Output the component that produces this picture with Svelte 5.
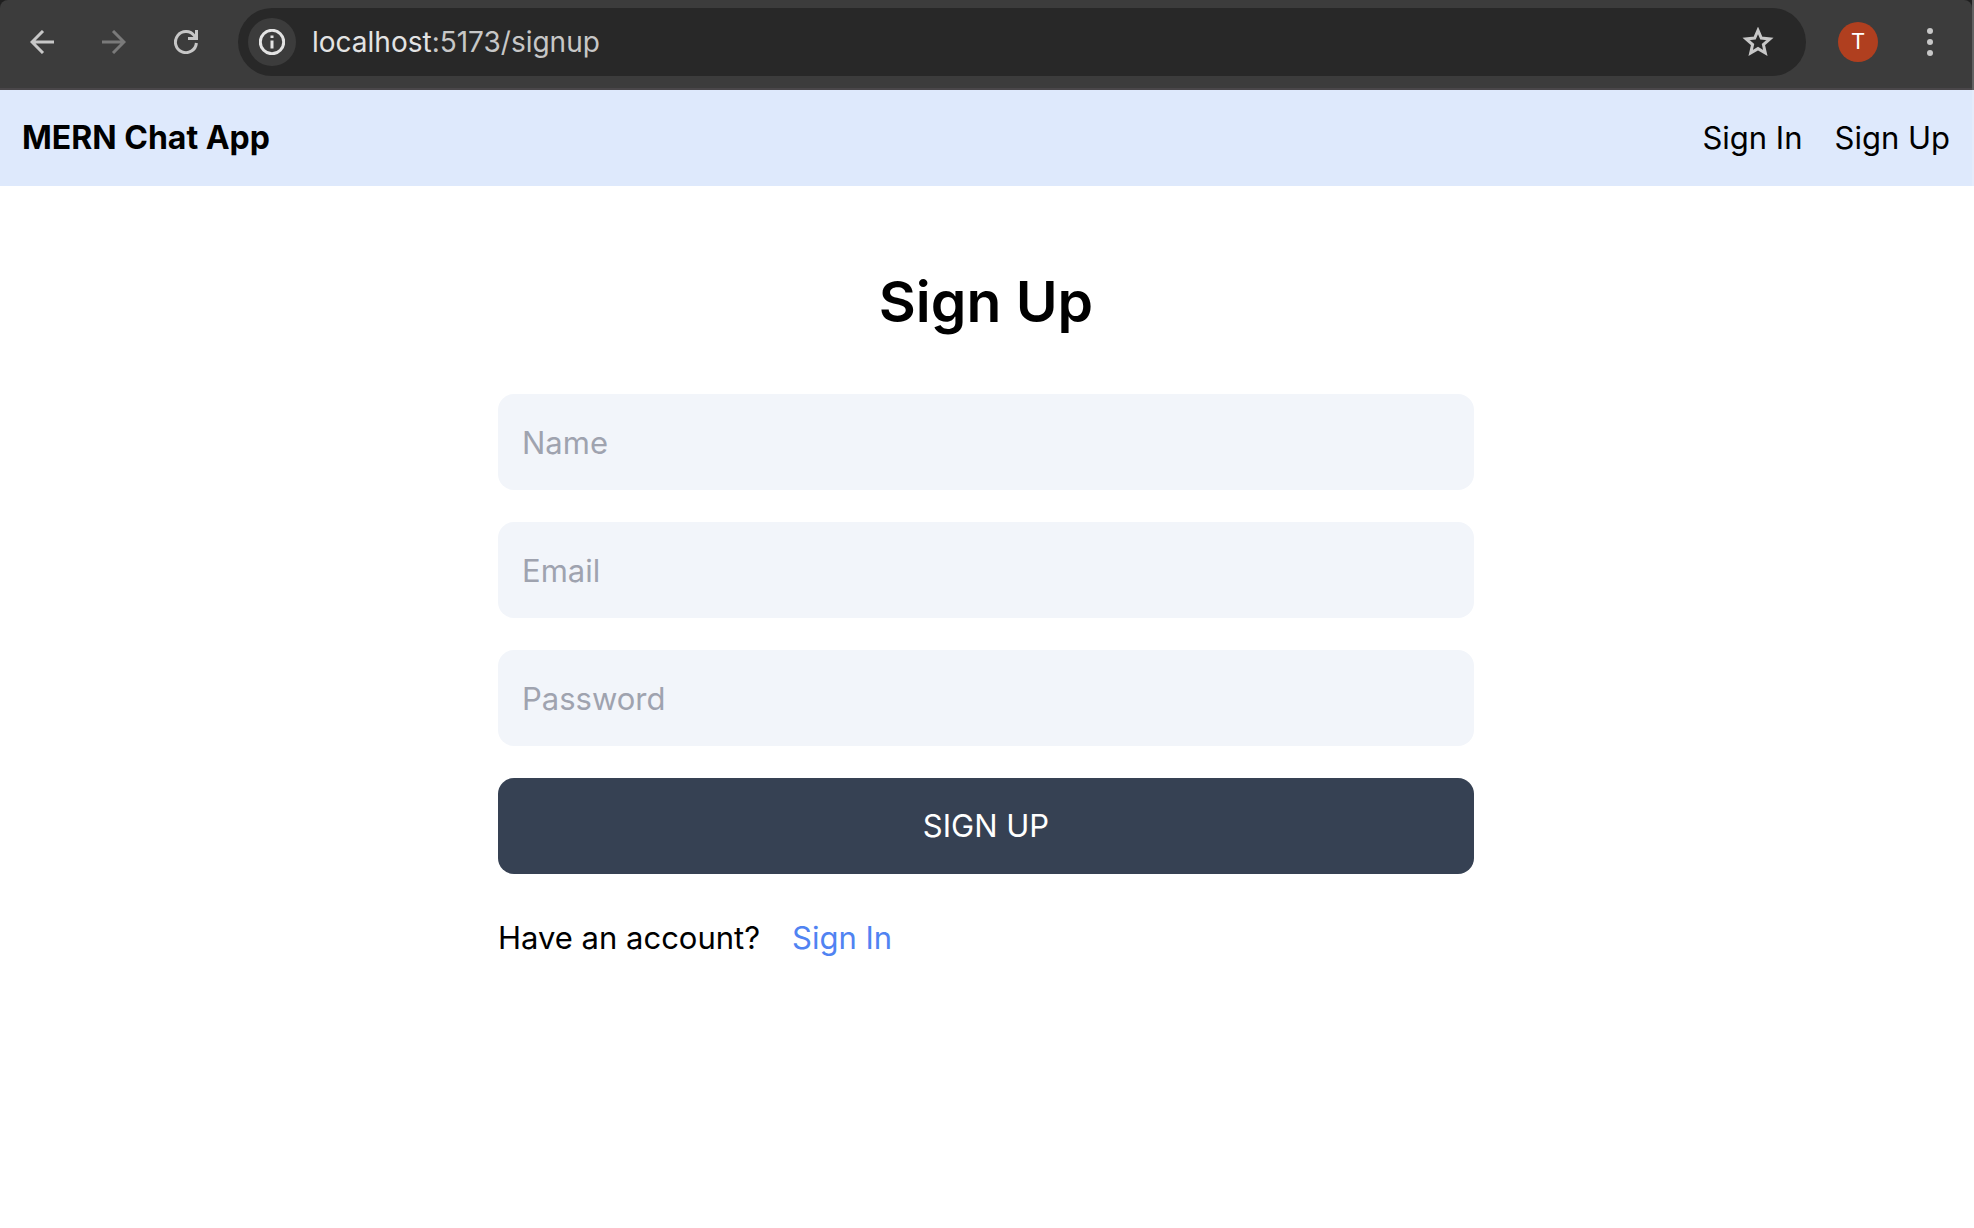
<script>
  let name = $state('');
  let email = $state('');
  let password = $state('');
</script>

<div class="window">
  <div class="frame">
    <div class="toolbar">
      <div class="nav-buttons">
        <button type="button" class="tool" aria-label="Back">
          <svg width="24" height="24" viewBox="0 0 24 24"><path d="M24 12H2M13 1L2 12l11 11" /></svg>
        </button>
        <button type="button" class="tool dim" aria-label="Forward">
          <svg width="24" height="24" viewBox="0 0 24 24"><path d="M0 12h22M11 1l11 11-11 11" /></svg>
        </button>
        <button type="button" class="tool" aria-label="Reload">
          <svg width="24" height="24" viewBox="0 0 24 24"><path d="M22.400 13A10.500 10.500 0 1 1 20.500 6L22 8.500M22.500 0v8.500H14" /></svg>
        </button>
      </div>
      <div class="address">
        <button type="button" class="info" aria-label="Site information">
          <svg width="26" height="26" viewBox="0 0 26 26"><circle cx="13" cy="13" r="11.700" /><path d="M13 11.500v8M13 6.500v2.600" /></svg>
        </button>
        <span class="url"><span class="host">localhost</span>:5173/signup</span>
        <button type="button" class="star" aria-label="Bookmark this page">
          <svg width="32" height="30" viewBox="0 0 32 30"><path d="M16 3.400l3.300 7.700 8.600.8-6.500 5.700 1.900 8.400L16 21.600 8.700 26l1.900-8.400-6.500-5.700 8.600-.8z" /></svg>
        </button>
      </div>
      <button type="button" class="avatar" aria-label="Profile">T</button>
      <button type="button" class="tool" aria-label="Menu">
        <svg class="dots" width="6" height="28" viewBox="0 0 6 28"><circle cx="3" cy="3" r="3" /><circle cx="3" cy="14" r="3" /><circle cx="3" cy="25" r="3" /></svg>
      </button>
    </div>
  </div>

  <header>
    <a class="brand" href="/">MERN Chat App</a>
    <nav>
      <a href="/signin">Sign In</a>
      <a href="/signup">Sign Up</a>
    </nav>
  </header>

  <main>
    <h1>Sign Up</h1>
    <form onsubmit={(e) => e.preventDefault()}>
      <input type="text" placeholder="Name" aria-label="Name" bind:value={name} />
      <input type="email" placeholder="Email" aria-label="Email" bind:value={email} />
      <input type="password" placeholder="Password" aria-label="Password" bind:value={password} />
      <button type="submit" class="submit">Sign Up</button>
    </form>
    <div class="switch">
      <p>Have an account?</p>
      <a href="/signin">Sign In</a>
    </div>
  </main>
</div>

<style>
  :global(body) {
    margin: 0;
    background: #fff;
  }
  .window {
    min-height: 100vh;
    box-sizing: border-box;
    font-family: Inter, 'Liberation Sans', sans-serif;
    font-size: 31px;
    line-height: 48px;
    color: #000;
  }
  button {
    border: 0;
    padding: 0;
    background: none;
    font: inherit;
    cursor: pointer;
  }
  a {
    color: inherit;
    text-decoration: none;
  }
  svg {
    display: block;
    fill: none;
    stroke: currentColor;
    stroke-width: 3;
  }

  .frame {
    background: #1f1f1f;
    border-right: 2px solid #626262;
  }
  .toolbar {
    display: flex;
    align-items: center;
    padding: 8px 18px 14px;
    border-radius: 8px 8px 0 0;
    background: #3c3c3c;
    box-shadow: inset 0 -2px #4a474a;
  }
  .nav-buttons {
    display: flex;
    gap: 24px;
    margin-right: 28px;
  }
  .tool {
    display: grid;
    place-items: center;
    width: 48px;
    height: 48px;
    color: #c7c7c7;
  }
  .dim {
    color: #7a7a7a;
  }
  .dots {
    fill: currentColor;
    stroke: none;
  }
  .address {
    flex: 1;
    display: flex;
    align-items: center;
    height: 68px;
    box-sizing: border-box;
    padding: 0 32px 0 10px;
    border-radius: 34px;
    background: #282828;
  }
  .info {
    display: grid;
    place-items: center;
    width: 48px;
    height: 48px;
    border-radius: 50%;
    background: #3c3c3c;
    color: #e3e3e3;
  }
  .url {
    flex: 1;
    padding-left: 16px;
    font-size: 28px;
    color: #c7c7c7;
  }
  .host {
    color: #e3e3e3;
  }
  .star {
    color: #c7c7c7;
  }
  .avatar {
    width: 40px;
    height: 40px;
    margin: 0 28px 0 32px;
    border-radius: 50%;
    background: #b03f1f;
    color: #fff;
    font-family: Roboto, sans-serif;
    font-size: 22px;
    line-height: 40px;
  }

  header {
    display: flex;
    justify-content: space-between;
    align-items: center;
    padding: 24px 22px;
    border-right: 2px solid #e4ecfc;
    background: #dee9fc;
  }
  .brand {
    font-size: 32px;
    font-weight: 700;
  }
  nav {
    display: flex;
    gap: 32px;
  }
  main {
    max-width: 976px;
    margin: 0 auto;
    padding: 24px 26px 24px 24px;
  }
  h1 {
    margin: 56px 0;
    font-size: 57px;
    font-weight: 600;
    line-height: 72px;
    text-align: center;
  }
  form {
    display: flex;
    flex-direction: column;
    gap: 32px;
  }
  input,
  .submit {
    box-sizing: border-box;
    width: 100%;
    height: 96px;
    padding: 24px;
    border: 0;
    border-radius: 16px;
    font: inherit;
  }
  input {
    background: #f2f5fa;
    color: #000;
  }
  input::placeholder {
    color: #9fa3af;
    opacity: 1;
  }
  .submit {
    background: #364153;
    color: #fff;
    text-transform: uppercase;
  }
  .switch {
    display: flex;
    gap: 32px;
    margin-top: 40px;
  }
  .switch p {
    margin: 0;
  }
  .switch a {
    color: #5083f2;
  }
</style>
